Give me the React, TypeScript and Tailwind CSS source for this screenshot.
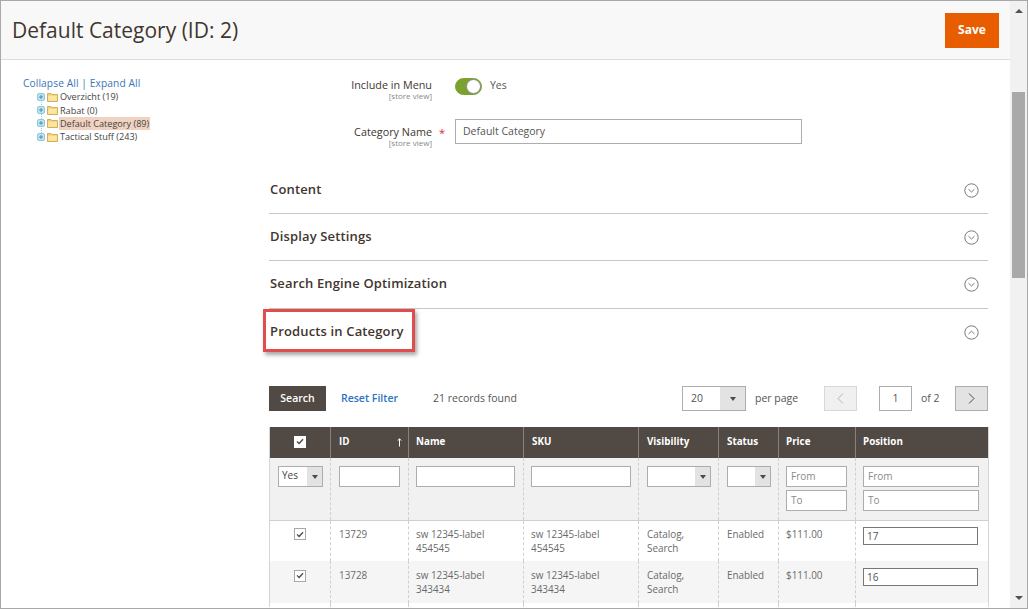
import React from "react";

const font = "font-['Open_Sans',sans-serif]";

function Circle({ up }: { up?: boolean }) {
  return (
    <svg width="15" height="15" viewBox="0 0 15 15" fill="none" stroke="#6b6b6b">
      <circle cx="7.5" cy="7.5" r="6.7" strokeWidth="0.9" />
      <path d={up ? "M4.5 9 L7.5 6.2 L10.5 9" : "M4.5 6.2 L7.5 9 L10.5 6.2"} strokeWidth="0.9" />
    </svg>
  );
}

function Folder() {
  return (
    <svg width="11" height="10" viewBox="0 0 11 10">
      <path d="M0.5 1.5 H4 L5 2.5 H10.5 V9.5 H0.5 Z" fill="#f3cf6e" stroke="#c8a04a" strokeWidth="0.8" />
      <rect x="1.2" y="3.6" width="8.6" height="5.2" fill="#fde7a0" />
    </svg>
  );
}

function Plus() {
  return (
    <svg width="8" height="8" viewBox="0 0 8 8" className="relative shrink-0">
      <rect x="0.5" y="0.5" width="7" height="7" rx="1.5" fill="#bfe3ef" stroke="#7dbcd3" strokeWidth="0.8" />
      <path d="M2 4 H6 M4 2 V6" stroke="#3a8eac" strokeWidth="0.9" />
    </svg>
  );
}

function TreeRow({ label, active }: { label: string; active?: boolean }) {
  return (
    <div className="flex items-center h-[13.4px]">
      <span className="w-[9px] flex"><Plus /></span>
      <span className="ml-[1px] flex"><Folder /></span>
      <span className={`ml-[1px] px-[1px] text-[9.1px] leading-[13px] text-[#444] ${active ? "bg-[#f0d2c0]" : ""}`}>{label}</span>
    </div>
  );
}

function Section({ title, up, border = true, h = 47, lift }: { title: string; up?: boolean; border?: boolean; h?: number; lift?: boolean }) {
  return (
    <div className={`flex items-center justify-between pr-[9px] ${border ? "border-b border-[#c6c6c6]" : ""}`} style={{ height: h }}>
      <span className={`pl-[1px] text-[13px] font-semibold tracking-[0.15px] text-[#41362f] ${lift ? "pb-[2px]" : ""}`}>{title}</span>
      <Circle up={up} />
    </div>
  );
}

function Caret() {
  return <span className="w-0 h-0 border-l-[3.5px] border-r-[3.5px] border-t-[4px] border-l-transparent border-r-transparent border-t-[#514943]" />;
}

function Sel({ w, value, btn = 15 }: { w: number; value?: string; btn?: number }) {
  return (
    <div className="flex h-[21px] border border-[#adadad] bg-white" style={{ width: w }}>
      <span className="flex-1 pl-[3px] text-[10px] leading-[17px] text-[#444]">{value}</span>
      <span className="flex items-center justify-center bg-[#e3e3e3]" style={{ width: btn }}><Caret /></span>
    </div>
  );
}

function Inp({ w, ph }: { w: number; ph?: string }) {
  return (
    <div className="h-[21px] border border-[#adadad] bg-white pl-[4px] text-[10px] leading-[19px] text-[#8a8a8a]" style={{ width: w }}>{ph}</div>
  );
}

function Check() {
  return (
    <span className="inline-flex items-center justify-center w-[12px] h-[12px] border border-[#a8a8a8] bg-white">
      <svg width="8" height="7" viewBox="0 0 8 7" fill="none"><path d="M1 3.4 L3.1 5.5 L7 1.2" stroke="#514943" strokeWidth="1.3" /></svg>
    </span>
  );
}

const th = "h-[31px] border-l border-[#8a817b] first:border-l-0 text-[9.8px] font-bold text-white align-middle";
const td = "border-l border-dashed border-[#cfcfcf] first:border-l-0 align-top text-[9.9px] leading-[14px] text-[#6a6a6a]";

function Row({ id, code, pos, alt }: { id: string; code: string; pos: string; alt?: boolean }) {
  const pt = alt ? "pt-[7px]" : "pt-[6px]";
  return (
    <tr className={alt ? "bg-[#f5f5f5] h-[42px]" : "bg-white h-[41px]"}>
      <td className={`${td} ${pt} text-center`}><Check /></td>
      <td className={`${td} ${pt} pl-[8px]`}>{id}</td>
      <td className={`${td} ${pt} pl-[7px]`}>sw 12345-label<br />{code}</td>
      <td className={`${td} ${pt} pl-[7px]`}>sw 12345-label<br />{code}</td>
      <td className={`${td} ${pt} pl-[8px]`}>Catalog,<br />Search</td>
      <td className={`${td} ${pt} pl-[8px]`}>Enabled</td>
      <td className={`${td} ${pt} pl-[7px]`}>$111.00</td>
      <td className={`${td} ${pt} pl-[7px]`}>
        <div className="w-[115px] h-[18px] border border-[#777] bg-white pl-[3px] text-[10px] leading-[17px] text-[#555]">{pos}</div>
      </td>
    </tr>
  );
}

export default function App() {
  return (
    <div className={`${font} relative w-[1028px] h-[609px] overflow-hidden flex border border-[#a8a8a8] bg-white`}>
      <div className="w-[1009px] flex flex-col shrink-0">
        <header className="h-[59px] shrink-0 flex items-center justify-between bg-[#f8f8f8] border-b border-[#dcdcdc] pl-[11px] pr-[11px]">
          <h1 className="text-[21px] leading-[28px] text-[#41362f] pb-[1px]">Default Category (ID: 2)</h1>
          <button className="w-[54px] h-[35px] bg-[#e85d00] text-white text-[12px] font-bold">Save</button>
        </header>

        <div className="flex flex-1 min-h-0">
          <aside className="w-[268px] shrink-0 pl-[22px] pt-[16px]">
            <div className="text-[10.2px] leading-[14px] text-[#3b74b8] tracking-[0.1px]">Collapse All | Expand All</div>
            <div className="relative pl-[14px]">
              <span className="absolute left-[18px] top-[5px] h-[38px] border-l border-dotted border-[#9cc6d6]" />
              <TreeRow label="Overzicht (19)" />
              <TreeRow label="Rabat (0)" />
              <TreeRow label="Default Category (89)" active />
              <TreeRow label="Tactical Stuff (243)" />
            </div>
          </aside>

          <main className="w-[719px] shrink-0">
            <div className="flex h-[59px] pt-[18px]">
              <div className="w-[163px] text-right">
                <div className="text-[10.8px] leading-[13px] text-[#41362f]">Include in Menu</div>
                <div className="text-[8px] leading-[9px] text-[#888]">[store view]</div>
              </div>
              <div className="ml-[23px] flex items-start">
                <span className="relative w-[27px] h-[17px] rounded-full bg-[#79a22e] border border-[#79a22e]">
                  <span className="absolute right-0 top-0 w-[15px] h-[15px] rounded-full bg-white border border-[#8a8a8a]" />
                </span>
                <span className="ml-[8px] text-[10.5px] leading-[15px] text-[#555]">Yes</span>
              </div>
            </div>
            <div className="flex h-[48px]">
              <div className="w-[163px] text-right pt-[7px]">
                <div className="text-[10.8px] leading-[12px] text-[#41362f]">Category Name</div>
                <div className="text-[8px] leading-[9px] text-[#888]">[store view]</div>
              </div>
              <span className="w-[23px] pl-[7px] pt-[7px] text-[11px] leading-[14px] text-[#e22626]">*</span>
              <div className="w-[347px] h-[25px] border border-[#adadad] pl-[7px] text-[10.5px] leading-[23px] text-[#555]">Default Category</div>
            </div>

            <Section title="Content" />
            <Section title="Display Settings" />
            <Section title="Search Engine Optimization" h={48} lift />
            <Section title="Products in Category" up border={false} h={46} />

            <div className="h-[31px] mt-[28px] flex items-center">
              <button className="w-[57px] h-[25px] bg-[#514943] text-white text-[10.5px] font-semibold">Search</button>
              <span className="ml-[15px] text-[10.5px] font-semibold text-[#2a72c4]">Reset Filter</span>
              <span className="ml-[35px] text-[10.5px] text-[#555]">21 records found</span>
              <div className="ml-auto flex items-center">
                <div className="flex w-[64px] h-[25px] border border-[#adadad]">
                  <span className="flex-1 pl-[8px] text-[10.5px] leading-[23px] text-[#555]">20</span>
                  <span className="w-[25px] flex items-center justify-center bg-[#e3e3e3]"><Caret /></span>
                </div>
                <span className="ml-[9px] w-[69px] text-[10.5px] text-[#555]">per page</span>
                <span className="w-[33px] h-[25px] border border-[#d8d8d8] bg-[#f0f0f0] flex items-center justify-center">
                  <svg width="7" height="11" viewBox="0 0 7 11" fill="none"><path d="M6 0.5 L1 5.5 L6 10.5" stroke="#b5b5b5" /></svg>
                </span>
                <span className="ml-[22px] w-[33px] h-[25px] border border-[#adadad] text-center text-[10.5px] leading-[23px] text-[#555]">1</span>
                <span className="ml-[9px] w-[25px] text-[10.5px] text-[#555]">of 2</span>
                <span className="ml-[9px] w-[33px] h-[25px] border border-[#adadad] bg-[#e3e3e3] flex items-center justify-center">
                  <svg width="7" height="11" viewBox="0 0 7 11" fill="none"><path d="M1 0.5 L6 5.5 L1 10.5" stroke="#514943" /></svg>
                </span>
              </div>
            </div>

            <table className="mt-[13px] w-[719px] table-fixed border-collapse border-x border-[#d6d6d6]">
              <colgroup>
                <col className="w-[61px]" /><col className="w-[78px]" /><col className="w-[115px]" /><col className="w-[115px]" />
                <col className="w-[80px]" /><col className="w-[60px]" /><col className="w-[77px]" /><col className="w-[133px]" />
              </colgroup>
              <thead>
                <tr className="bg-[#514943]">
                  <th className={`${th} text-center`}>
                    <span className="inline-flex items-center justify-center w-[12px] h-[12px] bg-white">
                      <svg width="8" height="7" viewBox="0 0 8 7" fill="none"><path d="M1 3.4 L3.1 5.5 L7 1.2" stroke="#514943" strokeWidth="1.4" /></svg>
                    </span>
                  </th>
                  <th className={`${th} text-left pl-[8px]`}>
                    <span className="flex items-center justify-between pr-[6px]">ID
                      <svg width="5" height="9" viewBox="0 0 5 9" fill="none"><path d="M2.5 8.5 V1 M0.7 2.6 L2.5 0.8 L4.3 2.6" stroke="#fff" /></svg>
                    </span>
                  </th>
                  <th className={`${th} text-left pl-[7px]`}>Name</th>
                  <th className={`${th} text-left pl-[8px]`}>SKU</th>
                  <th className={`${th} text-left pl-[8px]`}>Visibility</th>
                  <th className={`${th} text-left pl-[8px]`}>Status</th>
                  <th className={`${th} text-left pl-[7px]`}>Price</th>
                  <th className={`${th} text-left pl-[7px]`}>Position</th>
                </tr>
              </thead>
              <tbody>
                <tr className="bg-[#f1f1f1] h-[62px] border-b border-[#d0d0d0]">
                  <td className={`${td} pt-[8px] pl-[8px]`}><Sel w={45} value="Yes" /></td>
                  <td className={`${td} pt-[8px] pl-[8px]`}><Inp w={61} /></td>
                  <td className={`${td} pt-[8px] pl-[7px]`}><Inp w={99} /></td>
                  <td className={`${td} pt-[8px] pl-[7px]`}><Inp w={100} /></td>
                  <td className={`${td} pt-[8px] pl-[8px]`}><Sel w={64} /></td>
                  <td className={`${td} pt-[8px] pl-[8px]`}><Sel w={44} /></td>
                  <td className={`${td} pt-[8px] pl-[7px]`}>
                    <Inp w={61} ph="From" />
                    <div className="mt-[3px]"><Inp w={61} ph="To" /></div>
                  </td>
                  <td className={`${td} pt-[8px] pl-[7px]`}>
                    <Inp w={116} ph="From" />
                    <div className="mt-[3px]"><Inp w={116} ph="To" /></div>
                  </td>
                </tr>
                <Row id="13729" code="454545" pos="17" />
                <Row id="13728" code="343434" pos="16" alt />
                <tr className="h-[4px]">
                  <td className={td} /><td className={td} /><td className={td} /><td className={td} />
                  <td className={td} /><td className={td} /><td className={td} /><td className={td} />
                </tr>
              </tbody>
            </table>
          </main>
        </div>
      </div>

      <div className="flex-1 flex flex-col items-center bg-[#f1f1f1]">
        <span className="mt-[8px] w-0 h-0 border-l-[4px] border-r-[4px] border-b-[4px] border-l-transparent border-r-transparent border-b-[#505050]" />
        <span className="mt-[79px] w-[13px] h-[186px] bg-[#a9a9a9]" />
        <span className="mt-auto mb-[8px] w-0 h-0 border-l-[4px] border-r-[4px] border-t-[4px] border-l-transparent border-r-transparent border-t-[#505050]" />
      </div>

      <div className="absolute left-[262px] top-[308px] w-[152px] h-[43px] border-[3px] border-[#e04d4d] shadow-[2px_3px_4px_rgba(0,0,0,0.35)]" />
    </div>
  );
}
